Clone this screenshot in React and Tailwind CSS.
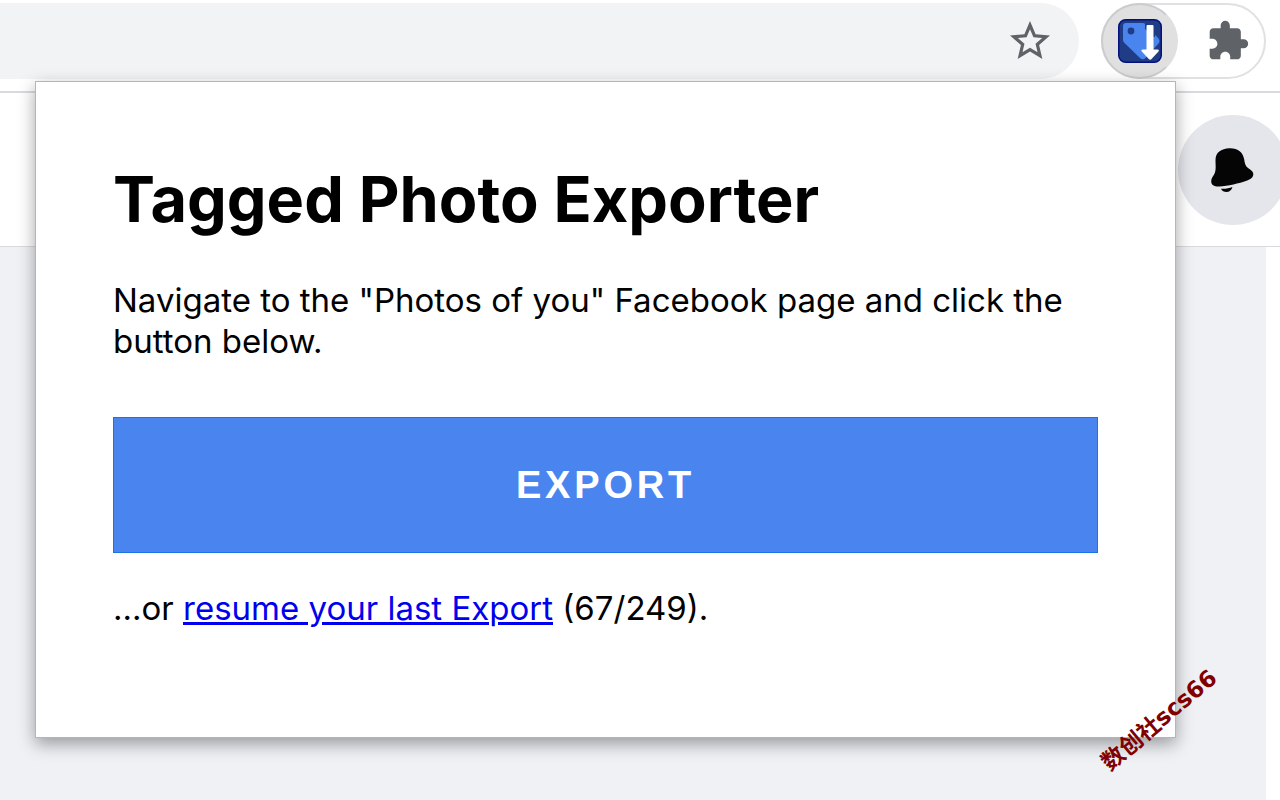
import React, { useState } from 'react';
import { MdExtension, MdStarBorder } from 'react-icons/md';

const ExtensionLogo = () => (
  <svg className="w-11 h-11" viewBox="0 0 44 44" aria-hidden="true">
    <rect x="0.75" y="0.75" width="42.5" height="42.5" rx="7" fill="#203c84" stroke="#02117c" strokeWidth="1.5" />
    <path
      d="M8 4h16.500a4 4 0 0 1 2.900 1.200L40.500 19.500a4 4 0 0 1 0 5L27.500 39a4 4 0 0 1-5.500 0L6 23.500A4 4 0 0 1 5 21V7a3 3 0 0 1 3-3z"
      fill="#4a84ef"
    />
    <path d="M27 5h10v13h-1.500L27 10z" fill="#203c84" />
    <circle cx="13" cy="12" r="3.400" fill="#203c84" />
    <path
      d="M29.500 6h5a1 1 0 0 1 1 1v23.500h4c1.300 0 1.700 1 1 1.900L33.500 40c-.8.9-1.900.9-2.700 0l-7-7.600c-.8-.9-.4-1.900.9-1.900h3.800V7a1 1 0 0 1 1-1z"
      fill="#fff"
    />
  </svg>
);

const BellIcon = () => (
  <svg className="w-12 h-12" viewBox="0 0 48 48" aria-hidden="true">
    <path
      d="M6.500 14C6.500 6.500 12 2.500 20.500 2.200 29 2 34 6 35.200 13.500c.5 4 1.300 6.500 3.800 8.500 3 2 5.500 3.500 5.300 6.500-.2 3-2.800 4.800-6.800 6.200-7 2.600-19 5.300-27 5.700-5.500.2-8.300-1.500-8.300-5.200 0-3.200 2-5 3.400-7.700C7.300 24 6.500 19 6.500 14z"
      fill="#050505"
    />
    <path d="M12 42.700c4 .3 8-.3 11.500-1.700-1 3.200-3.300 5-6 5-2.500 0-4.500-1.200-5.500-3.300z" fill="#050505" />
  </svg>
);

const Toolbar = () => (
  <div className="flex justify-between h-[93px] pt-[3px] border-b-2 border-[#d7dadf] bg-white">
    <div className="flex flex-1 items-center justify-end h-[76px] mr-[22px] pr-[25px] rounded-r-full bg-[#f1f3f4]">
      <button type="button" aria-label="Bookmark this page">
        <MdStarBorder className="w-12 h-12 text-[#5f6368]" />
      </button>
    </div>
    <div className="flex items-center justify-between w-[165px] h-[76px] mr-[14px] pr-[14px] rounded-full border-2 border-[#e0e1e2]">
      <button
        type="button"
        aria-label="Tagged Photo Exporter"
        className="flex items-center justify-center w-[77px] h-[76px] -ml-[2px] rounded-full border-2 border-[#cbcccd] border-r-[#e0e0e0] bg-[#e0e0e0]"
      >
        <ExtensionLogo />
      </button>
      <button type="button" aria-label="Extensions">
        <MdExtension className="w-11 h-11 text-[#5f6368]" />
      </button>
    </div>
  </div>
);

const Popup = () => {
  const [progress, setProgress] = useState({ done: 67, total: 249 });

  const handleExport = () => {
    setProgress({ ...progress, done: 0 });
  };

  return (
    <div className="absolute top-[81px] left-[35px] right-[104px] px-[77px] pt-[77px] pb-[108px] border border-[#b4b5b7] bg-white text-black shadow-[0_6px_16px_rgba(0,0,0,0.36)]">
      <h1 className="text-[63px] leading-[80px] font-bold">Tagged Photo Exporter</h1>
      <p className="mt-[41px] text-[33px] leading-[41px]">
        Navigate to the "Photos of you" Facebook page and click the button below.
      </p>
      <button
        type="button"
        onClick={handleExport}
        className="w-full h-[136px] mt-[55px] border border-[#1a73e8] bg-[#4a84ee] text-white text-[38px] font-bold tracking-widest font-['Liberation_Sans',Arial,sans-serif]"
      >
        EXPORT
      </button>
      <p className="mt-[35px] text-[33px] leading-[41px]">
        ...or{' '}
        <a href="#resume" className="text-[#0000ee] underline">
          resume your last Export
        </a>{' '}
        ({progress.done}/{progress.total}).
      </p>
    </div>
  );
};

const App = () => {
  return (
    <div className="relative flex flex-col min-h-screen overflow-hidden bg-white font-['Inter',sans-serif]">
      <Toolbar />

      {/* Page header behind the popup */}
      <div className="flex items-center justify-end h-[154px] border-b border-[#d9dadd] bg-white">
        <button
          type="button"
          aria-label="Notifications"
          className="flex items-center justify-center w-[110px] h-[110px] -mr-2 rounded-full bg-[#e4e6eb]"
        >
          <BellIcon />
        </button>
      </div>

      {/* Page body, with the scrollbar gutter on the right */}
      <div className="flex-1 mr-[14px] bg-[#eff1f5]"></div>

      <Popup />

      <span className="absolute right-[50px] bottom-[64px] -rotate-[40deg] whitespace-nowrap text-[23px] leading-8 font-bold text-[#800000] font-['DejaVu_Sans','Noto_Sans_CJK_SC',sans-serif]">
        数创社scs66
      </span>
    </div>
  );
};

export default App;
